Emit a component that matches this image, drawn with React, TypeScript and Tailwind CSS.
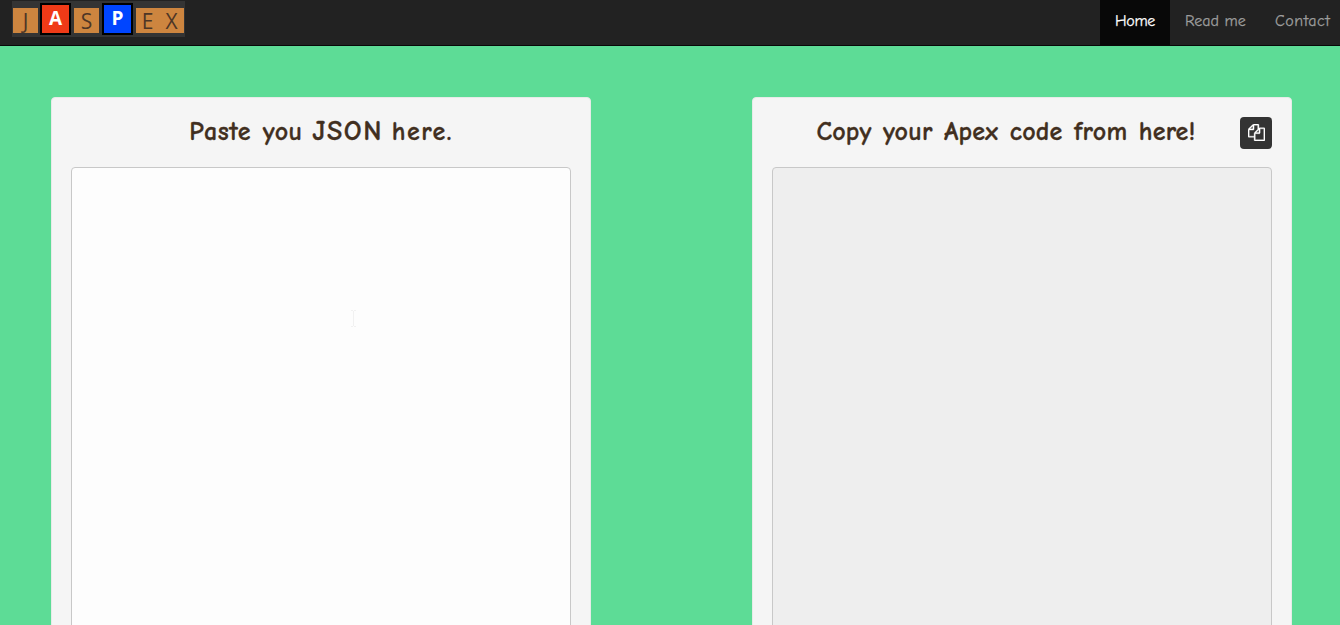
import type { ReactNode } from "react";

function Tile({ letter, width }: { letter: string; width: string }) {
  return (
    <span className={`flex h-[25px] items-center justify-center bg-[#cd853f] pt-px text-[21px] leading-none text-[#4d3626] ${width}`}>
      {letter}
    </span>
  );
}

function BigTile({ letter, color }: { letter: string; color: string }) {
  return (
    <span className={`flex h-8 w-[31px] items-center justify-center border-2 border-black pb-px text-[19px] leading-none font-bold text-white ${color}`}>
      {letter}
    </span>
  );
}

function Logo() {
  return (
    <a href="#" className="ml-3 flex h-9 w-[173px] items-start bg-[#343434] pt-[2px] font-['Open_Sans',sans-serif]">
      <span className="mt-[5px] ml-px flex"><Tile letter="J" width="w-[25px]" /></span>
      <span className="ml-[2px] flex"><BigTile letter="A" color="bg-[#f03a17]" /></span>
      <span className="mt-[5px] ml-[3px] flex"><Tile letter="S" width="w-[25px]" /></span>
      <span className="ml-[3px] flex"><BigTile letter="P" color="bg-[#0045ff]" /></span>
      <span className="mt-[5px] ml-[3px] flex">
        <Tile letter="E" width="w-[23px]" />
        <Tile letter="X" width="w-[25px]" />
      </span>
    </a>
  );
}

function CopyIcon() {
  return (
    <svg viewBox="0 0 1792 1792" className="mb-px size-[17px]" fill="currentColor" stroke="currentColor" strokeWidth="35" aria-hidden="true">
      <path d="M1696 384q40 0 68 28t28 68v1216q0 40-28 68t-68 28h-960q-40 0-68-28t-28-68v-288h-544q-40 0-68-28t-28-68v-672q0-40 20-88t48-76l408-408q28-28 76-48t88-20h416q40 0 68 28t28 68v328q68-40 128-40h416zm-544 213l-299 299h299v-299zm-640-384l-299 299h299v-299zm196 647l316-316v-416h-384v416q0 40-28 68t-68 28h-416v640h512v-256q0-40 20-88t48-76zm956 804v-1152h-384v416q0 40-28 68t-68 28h-416v640h896z" />
    </svg>
  );
}

function Panel({ title, children, action }: { title: ReactNode; children: ReactNode; action?: ReactNode }) {
  return (
    <section className="flex h-[640px] w-[540px] flex-col rounded border border-[#e7ebe8] bg-[#f5f5f5] px-[19px] pt-[19px]">
      <div className="flex h-8 items-start">
        <h3 className="-mt-px flex h-8 grow items-center justify-center text-[26px] font-bold whitespace-nowrap text-[#412f20] [-webkit-text-stroke:0.3px_#412f20]">
          {title}
        </h3>
        {action}
      </div>
      <div className="mt-[18px] flex grow">{children}</div>
    </section>
  );
}

export default function App() {
  return (
    <div className="h-[625px] w-full overflow-hidden bg-[#5ddc96] font-['Comic_Sans_MS','Comic_Neue','Open_Sans',sans-serif]">
      <nav className="flex h-[46px] items-start justify-between border-b border-[#080808] bg-[#222222]">
        <div className="pt-px"><Logo /></div>
        <div className="flex h-[45px] text-[16px] leading-[43px] whitespace-nowrap text-[#9d9d9d] [-webkit-text-stroke:0.25px_currentColor]">
          <a href="#" className="w-[70px] bg-[#080808] pl-[15px] tracking-[-0.3px] text-white">Home</a>
          <a href="#" className="w-[90px] pl-[15px]">Read me</a>
          <a href="#" className="w-20 pl-[15px] tracking-[0.5px]">Contact</a>
        </div>
      </nav>
      <main className="flex gap-[161px] pt-[51px] pl-[51px]">
        <Panel
          title={
            <span className="tracking-[0.5px] [word-spacing:2px]">
              Paste you <span className="-mr-[3px] -ml-[2px] text-[28px] leading-8 tracking-[1.5px]">JSON</span>{" "}
              <span className="tracking-[1.5px]">here.</span>
            </span>
          }
        >
          <div className="relative flex grow">
            <textarea className="w-full resize-none rounded border border-[#c8c8c8] bg-[#fdfdfd] p-3 outline-none" aria-label="JSON input" />
            <svg className="pointer-events-none absolute top-[143px] left-[279px]" width="7" height="17" viewBox="0 0 7 17" fill="none" stroke="#f1f1f1" aria-hidden="true">
              <path d="M1 .5h2M4 .5h2M3.5 1v15M1 16.5h2M4 16.5h2" />
            </svg>
          </div>
        </Panel>
        <Panel
          title={<span className="tracking-[0.2px] [word-spacing:2px]">Copy your Apex code from here!</span>}
          action={
            <button className="flex size-8 shrink-0 items-center justify-center rounded bg-[#333333] text-white" aria-label="Copy code">
              <CopyIcon />
            </button>
          }
        >
          <textarea readOnly className="w-full resize-none rounded border border-[#c8c8c8] bg-[#eeeeee] p-3 outline-none" aria-label="Apex output" />
        </Panel>
      </main>
    </div>
  );
}
